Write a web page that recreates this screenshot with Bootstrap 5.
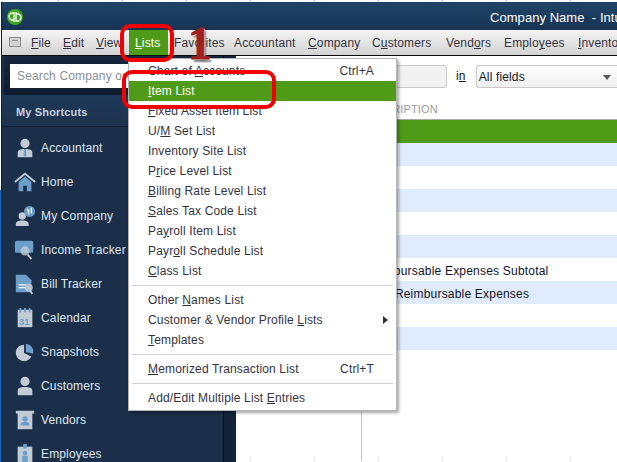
<!DOCTYPE html>
<html lang="en">
<head>
<meta charset="utf-8">
<title>QuickBooks Lists menu</title>
<link href="https://cdn.jsdelivr.net/npm/bootstrap@5.3.0/dist/css/bootstrap.min.css" rel="stylesheet">
<style>
html,body{width:617px;height:462px;overflow:hidden;margin:0}
body{position:relative;background:#fff linear-gradient(#1668c8,#1668c8) 0 190px/1px 272px no-repeat;font-family:"Liberation Sans",Arial,sans-serif;font-size:12px;line-height:14px;color:#2b2b3a;letter-spacing:.15px}
u{text-underline-offset:1px}
.gridtop{height:2px;background:linear-gradient(90deg,transparent 58px,#cfcfcf 58px,#cfcfcf 59px,transparent 59px) 0 0/64px 100%}
.qbwin{height:460px;margin-left:1px;background:#1b2f4a;border-left:1px solid #0f1d2f}
.titlebar{height:29px;background:linear-gradient(#1f4468,#173353);color:#fff;font-size:13px;white-space:nowrap;overflow:hidden}
.qblogo{width:16px;height:16px;margin-left:5px;margin-top:2px;flex:none}
.titletext{margin-left:467px;margin-top:4px;line-height:16px;letter-spacing:.05px}
.menubar{height:26px;background:linear-gradient(#f4f4f4,#d3d3d3);border-bottom:1px solid #0b0b0b;white-space:nowrap;overflow:hidden;color:#33333f}
.menugrip{width:12px;height:10px;margin-left:7px;margin-top:7px;background:linear-gradient(#8d8d8d,#8d8d8d) 2px 2px/6px 1px no-repeat #d2d2d2;border:1px solid #8d8d8d;flex:none}
.mi{flex:none;line-height:27px}
.mi-file{margin-left:10px;width:32px}
.mi-edit{width:33px}
.mi-view{width:33px}
.mi-lists{width:39px;height:25px;background:#4f9b18;color:#fff;padding-left:6px}
.mi-fav{width:66px;padding-left:6px}
.mi-acc{width:74px}
.mi-com{width:64px}
.mi-cus{width:74px}
.mi-ven{width:58px}
.mi-emp{width:74px}
.sidebar{width:221px;flex:none;background:#1b2f4a;color:#d9e2ec}
.searchstrip{height:39px;margin-left:2px;background:linear-gradient(#16273e,#0f1c2e);padding:8px 0 0 6px}
.searchbox{width:205px;height:24px;background:#fff;color:#8a8f96;padding:5px 0 0 7px;white-space:nowrap;overflow:hidden}
.shead{height:32px;line-height:35px;padding-left:14px;margin-bottom:4px;font-weight:700;font-size:11px;color:#c7d2df;background:linear-gradient(#1d3858,#1c3350);border-bottom:1px solid #0f1d2f}
.sitem{height:34px;padding-left:12px;gap:5px;white-space:nowrap;color:#dfe7ef}
.sitem svg{width:22px;height:22px;flex:none}
.sgutter{width:13px;flex:none;background:#13233a;border-left:1px solid #05090f}
.maincol{background:#fff;min-width:0;color:#15151f}
.filterbar{height:43px;padding-top:9px;padding-left:80px}
.filterinput{width:131px;height:23px;border:1px solid #c9c9c9;border-radius:3px;background:#f1f1f1;flex:none}
.filterin{margin:0 10px 0 9px}
.filterselect{flex:1;height:23px;border:1px solid #c9c9c9;border-right:0;border-radius:3px 0 0 3px;background:linear-gradient(#fff,#f0f0f0);padding:4px 0 0 2px}
.caret{width:0;height:0;border:4px solid transparent;border-top:5px solid #555;border-bottom:0;margin:5px 6px 0 auto}
.thead{height:21px;padding-left:125px;color:#9a9a9a;font-size:11px;border-bottom:1px solid #aaa;line-height:20px;white-space:nowrap}
.tablewrap{position:relative;overflow:hidden;height:341px;background:linear-gradient(90deg,transparent 14px,#d8d8d8 14px,#d8d8d8 15px,transparent 15px) 0 100%/64px 2px repeat-x}
.tablewrap::before{content:"";position:absolute;left:125px;top:0;bottom:0;width:1px;background:#c5c5c5}
.trow{position:relative;height:23px;line-height:26px;padding-left:129px;white-space:nowrap;color:#12121f;letter-spacing:.2px}
.trow-green{background:#4f9b18}
.trow-blue{background:#e0ecfd}
.dropmenu{position:absolute;left:128px;top:58px;width:269px;height:353px;background:#fff;border:1px solid #b5b5b5;box-shadow:2px 2px 3px rgba(0,0,0,.35);padding-top:2px;color:#33333f;white-space:nowrap;z-index:5}
.dm{height:20px;line-height:20px;padding-left:19px;padding-right:22px;position:relative}
.dm-active{background:#4f9b18;color:#fff}
.dmsep{height:1px;background:#cfcfcf;margin:4px 3px}
.subarrow{position:absolute;right:8px;top:6px;width:0;height:0;border:4px solid transparent;border-left:5px solid #333;border-right:0}
.callout{position:absolute;border:4px solid #f00000;border-radius:10px;z-index:7}
.callout-a{left:120px;top:24px;width:54px;height:38px}
.callout-b{left:122px;top:70px;width:154px;height:39px}
.bignum{position:absolute;left:188px;top:20px;font-family:"Liberation Serif",serif;font-weight:700;font-size:47px;line-height:46px;color:#a01f1f;-webkit-text-stroke:1px #a01f1f;text-shadow:1px 1px 0 #ddd,2px 3px 2px #777;z-index:8;letter-spacing:0}
</style>
</head>
<body>
<div class="gridtop"></div>
<div class="qbwin d-flex flex-column">
  <div class="titlebar d-flex align-items-center">
    <svg class="qblogo" viewBox="0 0 16 16"><circle cx="8" cy="8" r="8" fill="#3fa61e"/><path d="M7 4H5.500a3.500 3.500 0 0 0 0 7H7zM7 4v9M9 12h1.500a3.500 3.500 0 0 0 0-7H9zM9 12V3" fill="none" stroke="#fff" stroke-width="1.3"/></svg>
    <span class="titletext">Company Name &nbsp;- Intu</span>
  </div>
  <div class="menubar d-flex align-items-start">
    <span class="menugrip"></span>
    <span class="mi mi-file"><u>F</u>ile</span>
    <span class="mi mi-edit"><u>E</u>dit</span>
    <span class="mi mi-view"><u>V</u>iew</span>
    <span class="mi mi-lists"><u>L</u>ists</span>
    <span class="mi mi-fav">Favorites</span>
    <span class="mi mi-acc">Accountant</span>
    <span class="mi mi-com"><u>C</u>ompany</span>
    <span class="mi mi-cus">C<u>u</u>stomers</span>
    <span class="mi mi-ven">Vend<u>o</u>rs</span>
    <span class="mi mi-emp">Emplo<u>y</u>ees</span>
    <span class="mi"><u>I</u>nvento</span>
  </div>
  <div class="d-flex flex-grow-1 overflow-hidden">
    <div class="sidebar">
      <div class="searchstrip"><div class="searchbox">Search Company or Help</div></div>
      <div class="shead">My Shortcuts</div>
      <div class="sitem d-flex align-items-center"><svg viewBox="0 0 24 24"><circle cx="12" cy="7" r="5" fill="#c3cbd4"/><path d="M4 22v-5c0-3 3-4 8-4s8 1 8 4v5z" fill="#c3cbd4"/><path d="M11 13h2l.5 8h-3z" fill="#6c9ecb"/></svg><span>Accountant</span></div>
      <div class="sitem d-flex align-items-center"><svg viewBox="0 0 24 24"><path d="M1 12 12 3l11 9" fill="none" stroke="#c3cbd4" stroke-width="2"/><path d="M5 12l7-6 7 6v10h-5v-6h-4v6H5z" fill="#6c9ecb"/></svg><span>Home</span></div>
      <div class="sitem d-flex align-items-center"><svg viewBox="0 0 24 24"><circle cx="9" cy="12" r="4" fill="#c3cbd4"/><path d="M2 23v-2c0-3 3-4 7-4s7 1 7 4v2z" fill="#c3cbd4"/><circle cx="17" cy="7" r="6" fill="#6c9ecb"/><path d="M14 5h2v5M19 3v6" stroke="#fff" stroke-width="1.2" fill="none"/></svg><span>My Company</span></div>
      <div class="sitem d-flex align-items-center"><svg viewBox="0 0 24 24"><rect x="1" y="2" width="20" height="13" rx="2" fill="#6c9ecb"/><circle cx="12" cy="13" r="5" fill="#c3cbd4" opacity=".8"/><path d="M15 17l4 5" stroke="#c3cbd4" stroke-width="2"/></svg><span>Income Tracker</span></div>
      <div class="sitem d-flex align-items-center"><svg viewBox="0 0 24 24"><path d="M2 2h11l6 6v13H2z" fill="#6c9ecb"/><path d="M5 13h8M5 16h8" stroke="#fff" stroke-width="1.2"/><circle cx="16" cy="16" r="4.500" fill="#c3cbd4" opacity=".85"/><path d="M18 20l2 3" stroke="#c3cbd4" stroke-width="2"/></svg><span>Bill Tracker</span></div>
      <div class="sitem d-flex align-items-center"><svg viewBox="0 0 24 24"><rect x="4" y="3" width="16" height="19" fill="#c3cbd4"/><path d="M7 1v5M12 1v5M17 1v5" stroke="#6c9ecb" stroke-width="2"/><text x="5.500" y="20" font-size="10" font-weight="700" fill="#6c9ecb" font-family="Liberation Sans">31</text></svg><span>Calendar</span></div>
      <div class="sitem d-flex align-items-center"><svg viewBox="0 0 24 24"><path d="M11 4a9 9 0 1 0 8 13l-8-4z" fill="#c3cbd4"/><path d="M13 3a9 9 0 0 1 8 11l-8-2z" fill="#6c9ecb"/></svg><span>Snapshots</span></div>
      <div class="sitem d-flex align-items-center"><svg viewBox="0 0 24 24"><circle cx="12" cy="7" r="5" fill="#c3cbd4"/><path d="M4 22v-5c0-3 3-4 8-4s8 1 8 4v5z" fill="#c3cbd4"/></svg><span>Customers</span></div>
      <div class="sitem d-flex align-items-center"><svg viewBox="0 0 24 24"><path d="M2 2h20v3H2zM4 5h16v17H4z" fill="#c3cbd4"/><circle cx="12" cy="11" r="3" fill="#6c9ecb"/><path d="M7 18c0-3 2-4 5-4s5 1 5 4z" fill="#6c9ecb"/></svg><span>Vendors</span></div>
      <div class="sitem d-flex align-items-center"><svg viewBox="0 0 24 24"><rect x="4" y="4" width="16" height="20" fill="#c3cbd4"/><rect x="10" y="1" width="4" height="5" fill="#6c9ecb"/><circle cx="12" cy="11" r="2.500" fill="#6c9ecb"/><rect x="9" y="14" width="6" height="10" fill="#6c9ecb"/></svg><span>Employees</span></div>
    </div>
    <div class="sgutter"></div>
    <div class="maincol flex-grow-1">
      <div class="filterbar d-flex align-items-start">
        <div class="filterinput"></div>
        <span class="filterin mt-1">i<u>n</u></span>
        <div class="filterselect d-flex"><span>All fields</span><span class="caret"></span></div>
      </div>
      <div class="thead">DESCRIPTION</div>
      <div class="tablewrap">
        <div class="trow trow-green"></div>
        <div class="trow trow-blue"></div>
        <div class="trow"></div>
        <div class="trow trow-blue"></div>
        <div class="trow"></div>
        <div class="trow trow-blue"></div>
        <div class="trow">Reimbursable Expenses Subtotal</div>
        <div class="trow trow-blue">Total Reimbursable Expenses</div>
        <div class="trow"></div>
        <div class="trow trow-blue">Taxes</div>
      </div>
    </div>
  </div>
</div>

<div class="dropmenu">
  <div class="dm d-flex justify-content-between"><span>Chart of <u>A</u>ccounts</span><span>Ctrl+A</span></div>
  <div class="dm dm-active"><u>I</u>tem List</div>
  <div class="dm"><u>F</u>ixed Asset Item List</div>
  <div class="dm">U/<u>M</u> Set List</div>
  <div class="dm">Inventory Site List</div>
  <div class="dm">P<u>r</u>ice Level List</div>
  <div class="dm"><u>B</u>illing Rate Level List</div>
  <div class="dm"><u>S</u>ales Tax Code List</div>
  <div class="dm">Pa<u>y</u>roll Item List</div>
  <div class="dm">Payr<u>o</u>ll Schedule List</div>
  <div class="dm"><u>C</u>lass List</div>
  <div class="dmsep"></div>
  <div class="dm">Other <u>N</u>ames List</div>
  <div class="dm">Customer &amp; Vendor Profile <u>L</u>ists<span class="subarrow"></span></div>
  <div class="dm"><u>T</u>emplates</div>
  <div class="dmsep"></div>
  <div class="dm d-flex justify-content-between"><span><u>M</u>emorized Transaction List</span><span>Ctrl+T</span></div>
  <div class="dmsep"></div>
  <div class="dm">Add/Edit Multiple List <u>E</u>ntries</div>
</div>
<div class="callout callout-a"></div>
<div class="callout callout-b"></div>
<div class="bignum">1</div>
</body>
</html>
